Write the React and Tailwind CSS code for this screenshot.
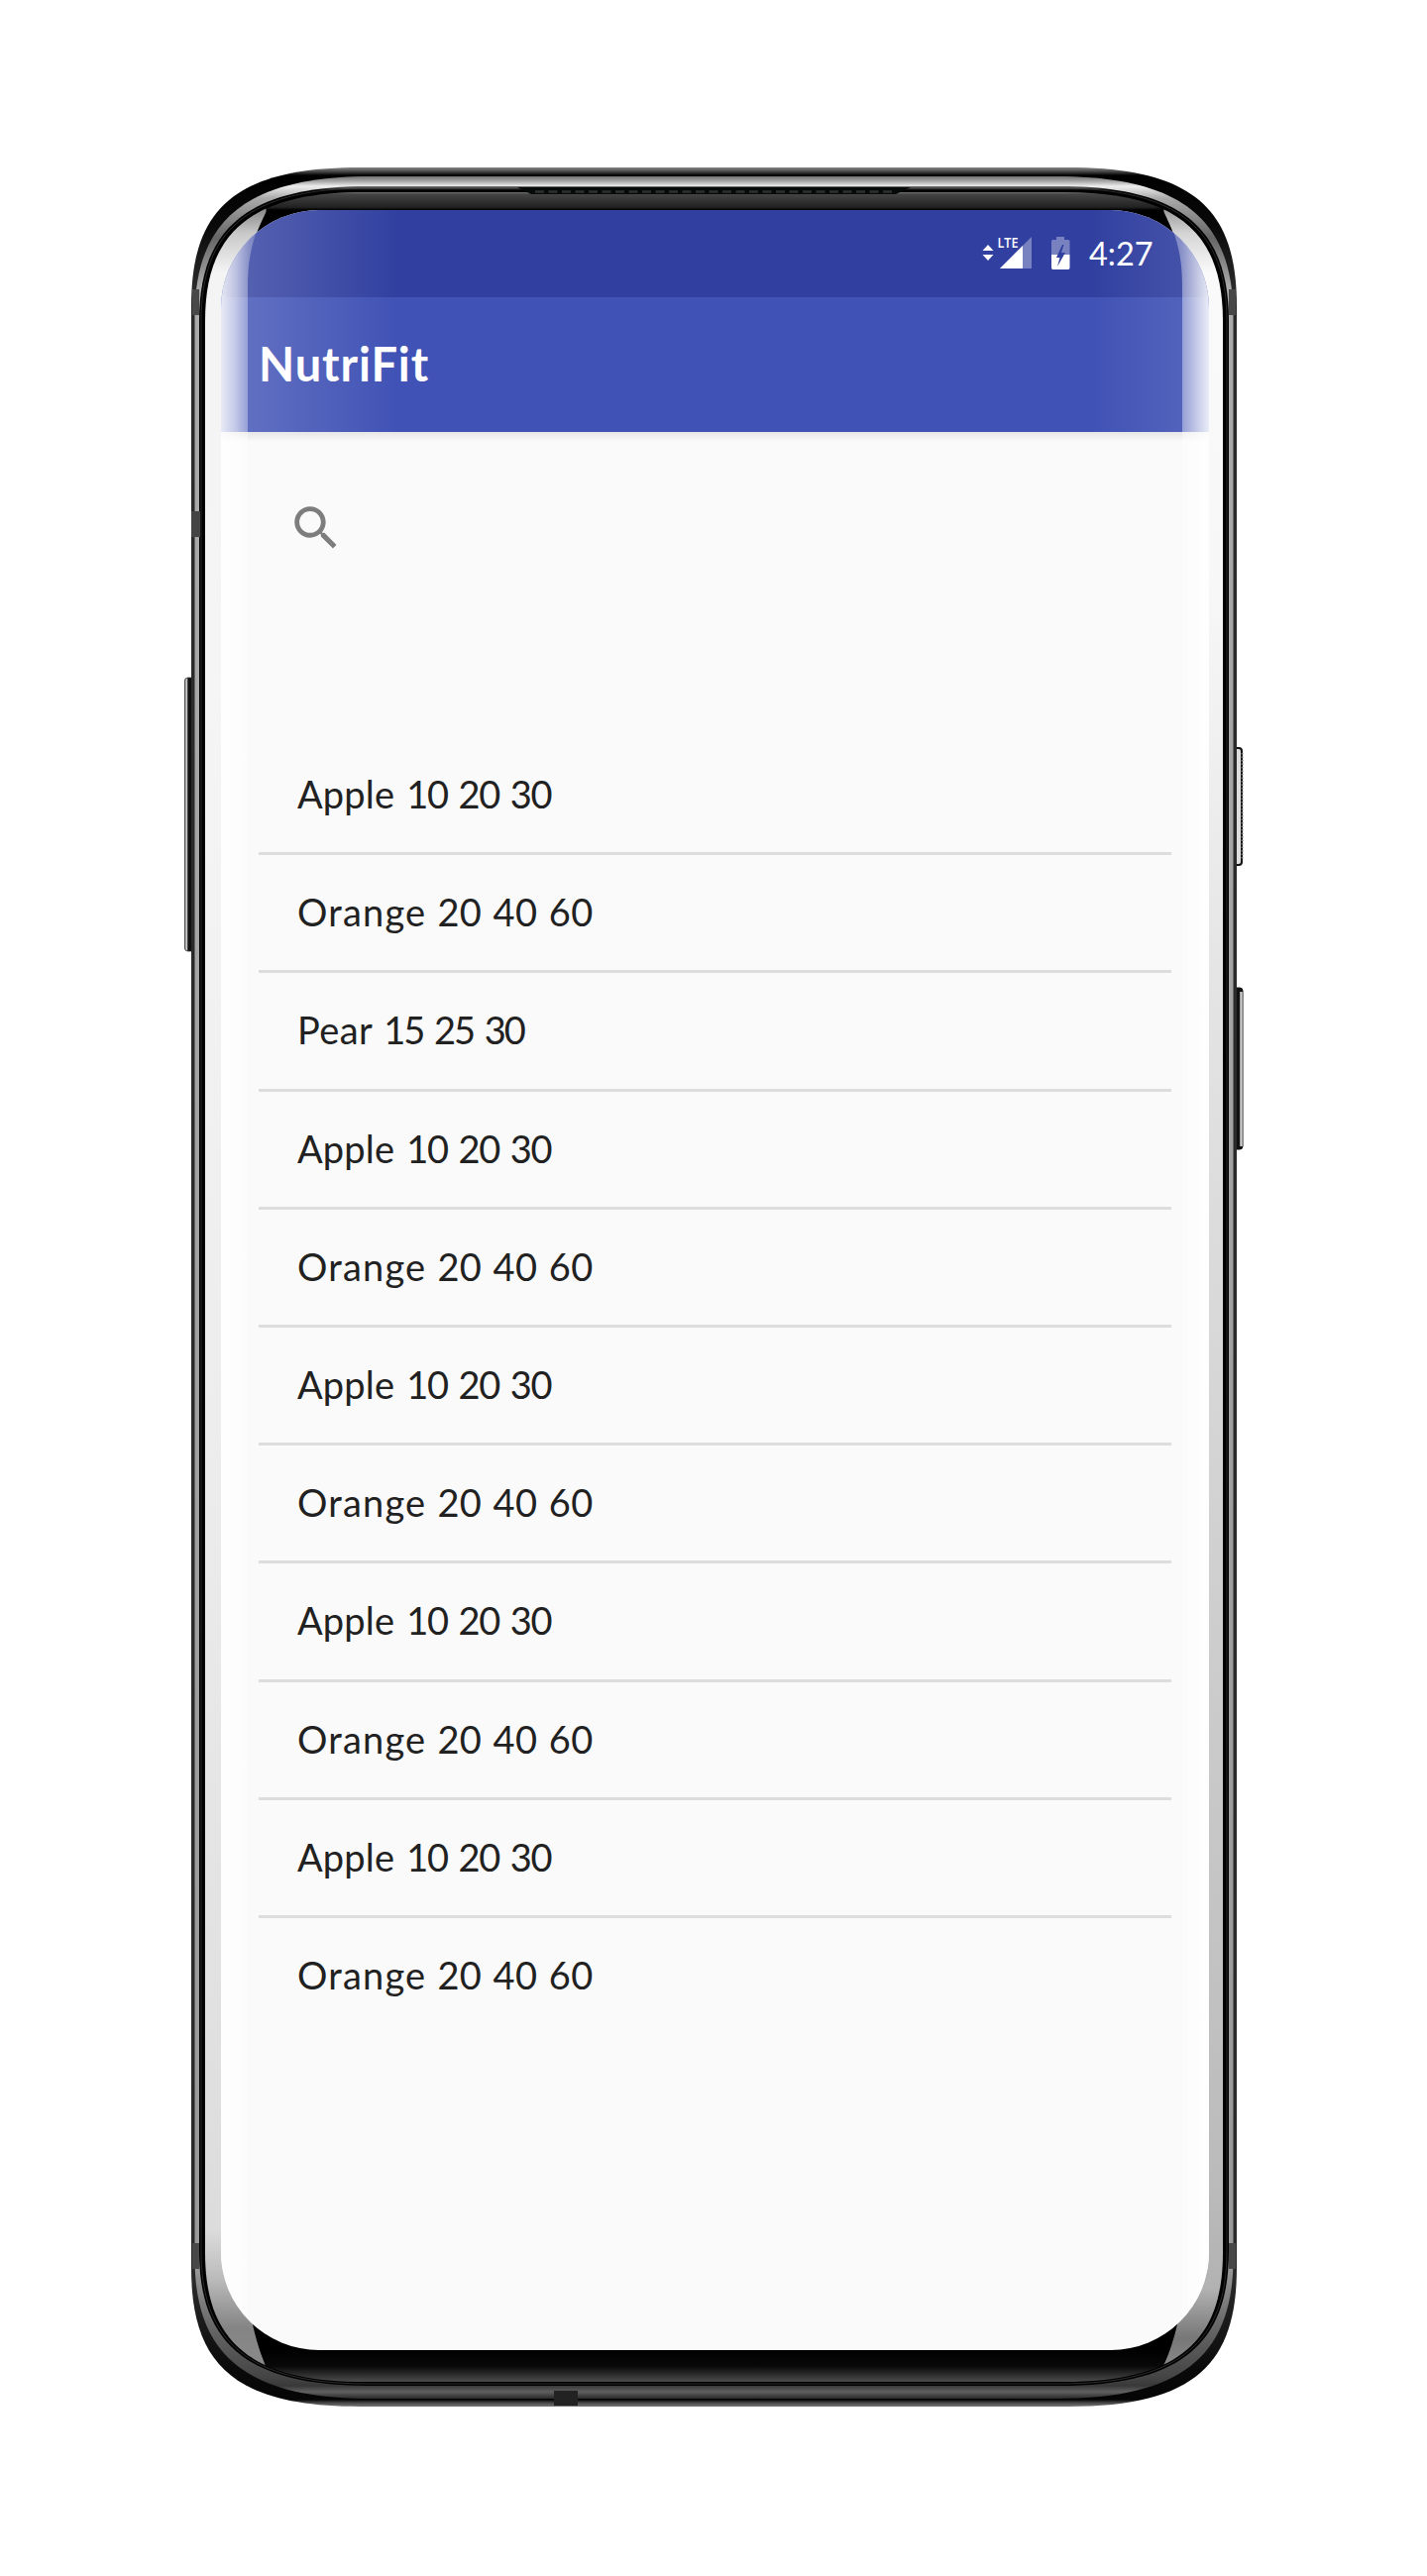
const items = {
  apple: { name: "Apple", values: "10 20 30", nameStyle: "tracking-[0.2px]", valueStyle: "ml-[12px] tracking-[-1.2px] [word-spacing:2px]" },
  orange: { name: "Orange", values: "20 40 60", nameStyle: "tracking-[1.2px]", valueStyle: "ml-[11px] tracking-[0.3px] [word-spacing:1.5px]" },
  pear: { name: "Pear", values: "15 25 30", nameStyle: "tracking-[0.4px]", valueStyle: "ml-[11px] tracking-[-2px] [word-spacing:3px]" },
};
const rows = ["apple", "orange", "pear", "apple", "orange", "apple", "orange", "apple", "orange", "apple", "orange"];

// Closed outline whose corners flow further along the horizontal edge than the vertical one.
const shell = (l, t, r, b, rx, ry, k = 0.72) => {
  const kx = rx * k;
  const ky = ry * 0.68;
  return `M${l} ${t + ry}C${l} ${t + ry - ky} ${l + rx - kx} ${t} ${l + rx} ${t}H${r - rx}C${r - rx + kx} ${t} ${r} ${t + ry - ky} ${r} ${t + ry}V${b - ry}C${r} ${b - ry + ky} ${r - rx + kx} ${b} ${r - rx} ${b}H${l + rx}C${l + rx - kx} ${b} ${l} ${b - ry + ky} ${l} ${b - ry}Z`;
};

function Grad({ id, y1, y2, stops }) {
  return (
    <linearGradient id={id} gradientUnits="userSpaceOnUse" x1="0" x2="0" y1={y1} y2={y2}>
      {stops.map(([y, c]) => (
        <stop key={y} offset={(y - y1) / (y2 - y1)} stopColor={c} />
      ))}
    </linearGradient>
  );
}

function Body() {
  return (
    <svg className="absolute inset-0" width="1440" height="2600" viewBox="0 0 1440 2600">
      <defs>
        <Grad id="outer" y1={169} y2={2429} stops={[[169, "#888"], [173, "#4a4a4a"], [177, "#000"], [230, "#0a0a0a"], [290, "#2a2a2a"], [2300, "#2a2a2a"], [2390, "#0a0a0a"], [2422, "#050505"], [2425, "#444"], [2429, "#777"]]} />
        <Grad id="rim" y1={178} y2={2421} stops={[[178, "#707070"], [183, "#a8a8a8"], [188, "#eee"], [200, "#aaa"], [240, "#666"], [290, "#aaa"], [2290, "#999"], [2350, "#666"], [2400, "#444"], [2408, "#383838"], [2414, "#606060"], [2421, "#2a2a2a"]]} />
        <Grad id="lip" y1={188} y2={2408} stops={[[188, "#777"], [192, "#000"], [2408, "#000"]]} />
        <Grad id="bezel" y1={193} y2={2404} stops={[[193, "#888"], [196, "#444"], [209, "#222"], [212, "#000"], [2372, "#000"], [2388, "#080808"], [2403, "#484848"]]} />
        <Grad id="glassL" y1={211} y2={2390} stops={[[211, "#888"], [235, "#c8c8c8"], [275, "#f4f4f4"], [700, "#f5f5f5"], [1500, "#ececec"], [2250, "#dcdcdc"], [2300, "#bbb"], [2350, "#848484"], [2390, "#8a8a8a"]]} />
        <Grad id="glassR" y1={211} y2={2390} stops={[[211, "#999"], [235, "#d4d4d4"], [275, "#fafafa"], [600, "#f7f7f7"], [1000, "#e4e4e4"], [1600, "#cfcfcf"], [2200, "#bbb"], [2310, "#b2b2b2"], [2360, "#777"], [2390, "#8a8a8a"]]} />
        <linearGradient id="key" x1="0" x2="1" y1="0" y2="0">
          <stop offset="0" stopColor="#777" />
          <stop offset="0.15" stopColor="#ddd" />
          <stop offset="0.28" stopColor="#111" />
          <stop offset="1" stopColor="#111" />
        </linearGradient>
        <clipPath id="inner"><path d={shell(207, 194, 1234, 2404, 160, 130)} /></clipPath>
      </defs>
      <rect x="186.500" y="684" width="12" height="276" rx="3" fill="url(#key)" stroke="#333" strokeWidth="0.800" />
      <rect x="1244" y="755" width="9" height="118" rx="3" fill="#ddd" stroke="#111" strokeWidth="2" />
      <path d="M1253.500 760V868" stroke="#777" strokeWidth="2" strokeDasharray="1.500 2" />
      <rect x="1243" y="997" width="11" height="163" rx="3" fill="#111" stroke="#111" />
      <path d="M1252.500 1001V1157" stroke="#ccc" strokeWidth="2.500" />
      <path d={shell(193, 169, 1248, 2429, 170, 140, 0.76)} fill="url(#outer)" />
      <path d={shell(196.500, 178, 1244.500, 2421, 178, 142)} fill="url(#rim)" />
      <path d={shell(201, 188, 1240, 2408, 170, 136)} fill="url(#lip)" />
      <path d={shell(203, 190, 1238, 2406, 168, 134)} fill="none" stroke="#555" strokeOpacity="0.5" />
      <path d={shell(207, 194, 1234, 2404, 160, 130)} fill="url(#bezel)" />
      <g clipPath="url(#inner)">
        <path d="M200 200H260Q271 209 268 215C256 240 250 256 250 290V2310C252 2345 262 2374 269 2390L255 2410H200Z" fill="url(#glassL)" />
        <path d="M1240 200H1183Q1172 209 1175 215C1187 240 1193 256 1193 290V2310C1191 2345 1181 2374 1173 2390L1188 2410H1240Z" fill="url(#glassR)" />
      </g>
      <path d="M194 292h7v26h-7zM194 2264h7v26h-7zM1240 292h7v26h-7zM1240 2264h7v26h-7z" fill="#484848" />
      <path d="M193 516h9v26h-9z" fill="#444" />
      <path d="M559 2413h24v15h-24z" fill="#222" />
      <path d="M522 189H919L904 196H536Z" fill="#060a08" />
      <path d="M540 193.500H900" stroke="#2c302e" strokeWidth="2.500" strokeDasharray="9 4.500" />
    </svg>
  );
}

function Glare() {
  return (
    <svg className="pointer-events-none absolute inset-0" width="1440" height="2600" viewBox="0 0 1440 2600">
      <defs>
        <linearGradient id="gl" x1="0" x2="1" y1="0" y2="0">
          <stop offset="0" stopColor="#fff" stopOpacity="0.85" />
          <stop offset="0.35" stopColor="#fff" stopOpacity="0.6" />
          <stop offset="0.65" stopColor="#fff" stopOpacity="0.3" />
          <stop offset="1" stopColor="#fff" stopOpacity="0.13" />
        </linearGradient>
        <linearGradient id="gr" x1="1" x2="0" y1="0" y2="0">
          <stop offset="0" stopColor="#fff" stopOpacity="0.88" />
          <stop offset="0.35" stopColor="#fff" stopOpacity="0.6" />
          <stop offset="0.65" stopColor="#fff" stopOpacity="0.36" />
          <stop offset="1" stopColor="#fff" stopOpacity="0.25" />
        </linearGradient>
        <clipPath id="scr"><rect x="223" y="212" width="997" height="2160" rx="99" /></clipPath>
      </defs>
      <g clipPath="url(#scr)">
        <path d="M223 212H267C256 240 250 256 250 290V2372H223Z" fill="url(#gl)" />
        <path d="M1220 212H1176C1187 240 1193 256 1193 290V2372H1220Z" fill="url(#gr)" />
      </g>
    </svg>
  );
}

export default function App() {
  return (
    <div className="relative h-[2600px] w-[1440px] overflow-hidden bg-white pl-[223px] pt-[212px] font-['Lato',sans-serif]">
      <Body />
      <main className="relative h-[2160px] w-[997px] overflow-hidden rounded-[99px] bg-[#fafafa]">
        <div className="relative h-[224px]">
          <div className="flex h-[88px] items-center bg-[#3140a0] pl-[768px] text-white">
            <svg width="52" height="52" viewBox="991 230 52 52" className="shrink-0 overflow-visible">
              <path d="M991.500 253L997 247L1002.500 253ZM991.500 257L997 263L1002.500 257Z" fill="#fff" />
              <path d="M1041 239V271H1009Z" fill="#fff" fillOpacity="0.35" />
              <path d="M1032 248V271H1009Z" fill="#fff" />
              <text x="1006.500" y="250" fontFamily="Open Sans" fontWeight="600" fontSize="14.500" textLength="21" lengthAdjust="spacingAndGlyphs" fill="#fff" stroke="#3140a0" strokeWidth="2" paintOrder="stroke">LTE</text>
            </svg>
            <svg width="20" height="36" viewBox="1060 238 20 36" className="ml-[17px] shrink-0">
              <path d="M1066 239h8v3h4q1.500 0 1.500 1.500V257H1061V243.500q0-1.500 1.500-1.500h3.500Z" fill="#fff" fillOpacity="0.35" />
              <path d="M1061 257h18.500v13q0 2-1.500 2H1062.500q-1.500 0-1.500-2Z" fill="#fff" />
              <path d="M1072 247L1066 260H1069.500L1067 269L1075 255H1071L1073.500 247Z" fill="#3140a0" />
            </svg>
            <span className="ml-[19px] text-[32.500px] leading-none">4:27</span>
          </div>
          <div className="flex h-[136px] items-center bg-[#4052b5] pb-[2px] pl-[38px] text-white">
            <h1 className="text-[47px] font-bold leading-none tracking-[0.9px]">NutriFit</h1>
          </div>
          <div className="absolute inset-0 bg-linear-to-r from-white/20 via-transparent via-18% to-transparent" />
          <div className="absolute inset-0 bg-linear-to-l from-white/12 via-transparent via-12% to-transparent" />
        </div>
        <div className="h-[10px] bg-linear-to-b from-black/8 to-transparent" />
        <div className="flex h-[298px] pl-[67px] pt-[58px]">
          <svg width="58" height="58" viewBox="0 0 24 24" fill="#7d7d7d">
            <path d="M15.500 14h-.79l-.28-.27C15.410 12.590 16 11.110 16 9.500 16 5.910 13.090 3 9.500 3S3 5.910 3 9.500 5.910 16 9.500 16c1.610 0 3.090-.59 4.230-1.570l.27.28v.79l5 4.990L20.490 19l-4.990-5zm-6 0C7.010 14 5 11.990 5 9.500S7.010 5 9.500 5 14 7.010 14 9.500 11.990 14 9.500 14z" />
          </svg>
        </div>
        <ul className="ml-[38px] w-[921px]">
          {rows.map((key, i) => {
            const item = items[key];
            return (
              <li key={i} className="flex h-[119.200px] items-center border-b-[3px] border-[#dddddd] pb-[2px] pl-[39px] text-[38px] leading-none text-[#212121] last:border-transparent">
                <span className={item.nameStyle}>{item.name}</span>
                <span className={item.valueStyle}>{item.values}</span>
              </li>
            );
          })}
        </ul>
      </main>
      <Glare />
    </div>
  );
}
